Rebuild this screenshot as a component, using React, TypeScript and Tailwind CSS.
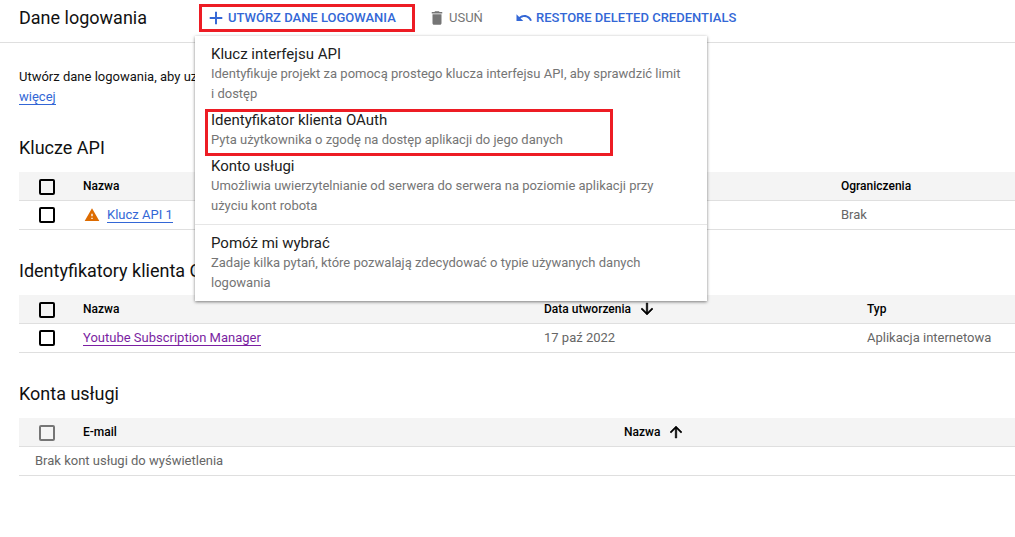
import type { ReactNode } from 'react';

const paths = {
  add: 'M20.4 13.3h-7.1v7.1h-2.6v-7.1H3.6v-2.6h7.1V3.6h2.6v7.1h7.1z',
  trash: 'M6 19c0 1.1.9 2 2 2h8c1.1 0 2-.9 2-2V7H6v12zM19 4h-3.5l-1-1h-5l-1 1H5v2h14V4z',
  undo: 'M12.5 8c-2.65 0-5.05.99-6.9 2.6L2 7v9h9l-3.62-3.62c1.39-1.16 3.16-1.88 5.12-1.88 3.54 0 6.55 2.31 7.6 5.5l2.37-.78C21.08 11.03 17.15 8 12.5 8z',
  warning: 'M1 21h22L12 2 1 21zm12-3h-2v-2h2v2zm0-4h-2v-4h2v4z',
  down: 'M20 12l-1.41-1.41L13 16.17V4h-2v12.17l-5.58-5.59L4 12l8 8 8-8z',
  up: 'M4 12l1.41 1.41L11 7.83V20h2V7.83l5.58 5.59L20 12l-8-8-8 8z',
};

function Icon({ name, className }: { name: keyof typeof paths; className: string }) {
  return (
    <svg viewBox="0 0 24 24" fill="currentColor" className={`block shrink-0 ${className}`}>
      <path d={paths[name]} />
    </svg>
  );
}

function Checkbox({ head = false, muted = false }: { head?: boolean; muted?: boolean }) {
  return (
    <span
      className={`ml-5 mr-7 block size-4 shrink-0 rounded-[2px] border-2 ${head ? 'mt-0.5' : ''} ${muted ? 'border-[#757575]' : 'border-black'}`}
    />
  );
}

function Row({ head = false, children }: { head?: boolean; children: ReactNode }) {
  return (
    <div
      className={`flex h-[29px] items-center border-b border-[#dfdfdf] ${head ? 'bg-[#f4f4f4] text-[12px] font-medium text-black' : 'text-[13px] text-[#666]'}`}
    >
      {children}
    </div>
  );
}

function Section({ title, children }: { title: string; children: ReactNode }) {
  return (
    <section className="mb-[29px]">
      <h2 className="mb-3 h-6 text-[18px] leading-6 text-[#111]">{title}</h2>
      {children}
    </section>
  );
}

function MenuItem({ title, children }: { title: string; children: ReactNode }) {
  return (
    <div className="pb-[6px] pl-4">
      <div className="h-5 text-[15px] leading-5 text-[#212121]">{title}</div>
      <div className="text-[13px] leading-5 text-[#757575]">{children}</div>
    </div>
  );
}

function Menu() {
  return (
    <div className="absolute top-9 left-[195px] z-10 h-[265px] w-[512px] bg-white pt-2 shadow-[0_1px_3px_rgba(0,0,0,0.5)]">
      <MenuItem title="Klucz interfejsu API">
        Identyfikuje projekt za pomocą prostego klucza interfejsu API, aby sprawdzić limit
        <br />i dostęp
      </MenuItem>
      <MenuItem title="Identyfikator klienta OAuth">
        Pyta użytkownika o zgodę na dostęp aplikacji do jego danych
      </MenuItem>
      <MenuItem title="Konto usługi">
        Umożliwia uwierzytelnianie od serwera do serwera na poziomie aplikacji przy
        <br />
        użyciu kont robota
      </MenuItem>
      <div className="mt-[2px] mb-2 h-px bg-[#e6e6e6]" />
      <MenuItem title="Pomóż mi wybrać">
        Zadaje kilka pytań, które pozwalają zdecydować o typie używanych danych
        <br />
        logowania
      </MenuItem>
      <div className="absolute top-[73px] left-[10px] h-[47px] w-[408px] border-3 border-[#ed1c24]" />
    </div>
  );
}

export default function App() {
  return (
    <div className="relative h-[537px] overflow-hidden bg-white font-['Roboto',sans-serif] whitespace-nowrap">
      <header className="flex h-[43px] items-start border-b border-[#dfdfdf] pt-1 pl-[19px] text-[13px] font-medium">
        <h1 className="h-7 w-[180px] text-[18px] leading-7 font-normal text-[#111]">Dane logowania</h1>
        <button className="flex h-7 w-[216px] items-center border-3 border-[#ed1c24] pl-[5px] text-[#3367d6]">
          <Icon name="add" className="size-[18px]" />
          <span className="ml-[3px]">UTWÓRZ DANE LOGOWANIA</span>
        </button>
        <button className="ml-[13px] flex h-7 w-[87px] items-center font-normal text-[#757575]">
          <Icon name="trash" className="size-[18px]" />
          <span className="ml-[3px]">USUŃ</span>
        </button>
        <button className="flex h-7 items-center text-[#3367d6]">
          <Icon name="undo" className="size-[18px]" />
          <span className="ml-[3px]">RESTORE DELETED CREDENTIALS</span>
        </button>
      </header>
      <Menu />
      <main className="pt-6 pl-[19px]">
        <p className="mb-[29px] h-10 text-[13px] leading-5 text-[#111]">
          Utwórz dane logowania, aby uzyskać
          <br />
          <a className="inline-block h-[18px] border-b border-[#3367d6] leading-5 text-[#3367d6]">więcej</a>
        </p>
        <Section title="Klucze API">
          <Row head>
            <Checkbox head />
            <span className="w-[758px]">Nazwa</span>
            <span>Ograniczenia</span>
          </Row>
          <Row>
            <Checkbox />
            <span className="flex w-[758px] items-center">
              <Icon name="warning" className="ml-[1px] size-4 text-[#dd6b00]" />
              <a className="ml-[7px] h-4 border-b border-[#3367d6] leading-4 text-[#3367d6]">Klucz API 1</a>
            </span>
            <span>Brak</span>
          </Row>
        </Section>
        <Section title="Identyfikatory klienta OAuth 2.0">
          <Row head>
            <Checkbox head />
            <span className="w-[461px]">Nazwa</span>
            <span className="flex w-[323px] items-center">
              Data utworzenia
              <Icon name="down" className="ml-[7px] size-[18px] stroke-current stroke-[0.7]" />
            </span>
            <span>Typ</span>
          </Row>
          <Row>
            <Checkbox />
            <span className="w-[461px]">
              <a className="inline-block h-4 border-b border-[#7b1fa2] leading-4 text-[#7b1fa2]">
                Youtube Subscription Manager
              </a>
            </span>
            <span className="w-[323px]">17 paź 2022</span>
            <span>Aplikacja internetowa</span>
          </Row>
        </Section>
        <Section title="Konta usługi">
          <Row head>
            <Checkbox head muted />
            <span className="w-[541px]">E-mail</span>
            <span className="flex items-center">
              Nazwa
              <Icon name="up" className="ml-[7px] size-[18px] stroke-current stroke-[0.7]" />
            </span>
          </Row>
          <Row>
            <span className="ml-4">Brak kont usługi do wyświetlenia</span>
          </Row>
        </Section>
      </main>
    </div>
  );
}
